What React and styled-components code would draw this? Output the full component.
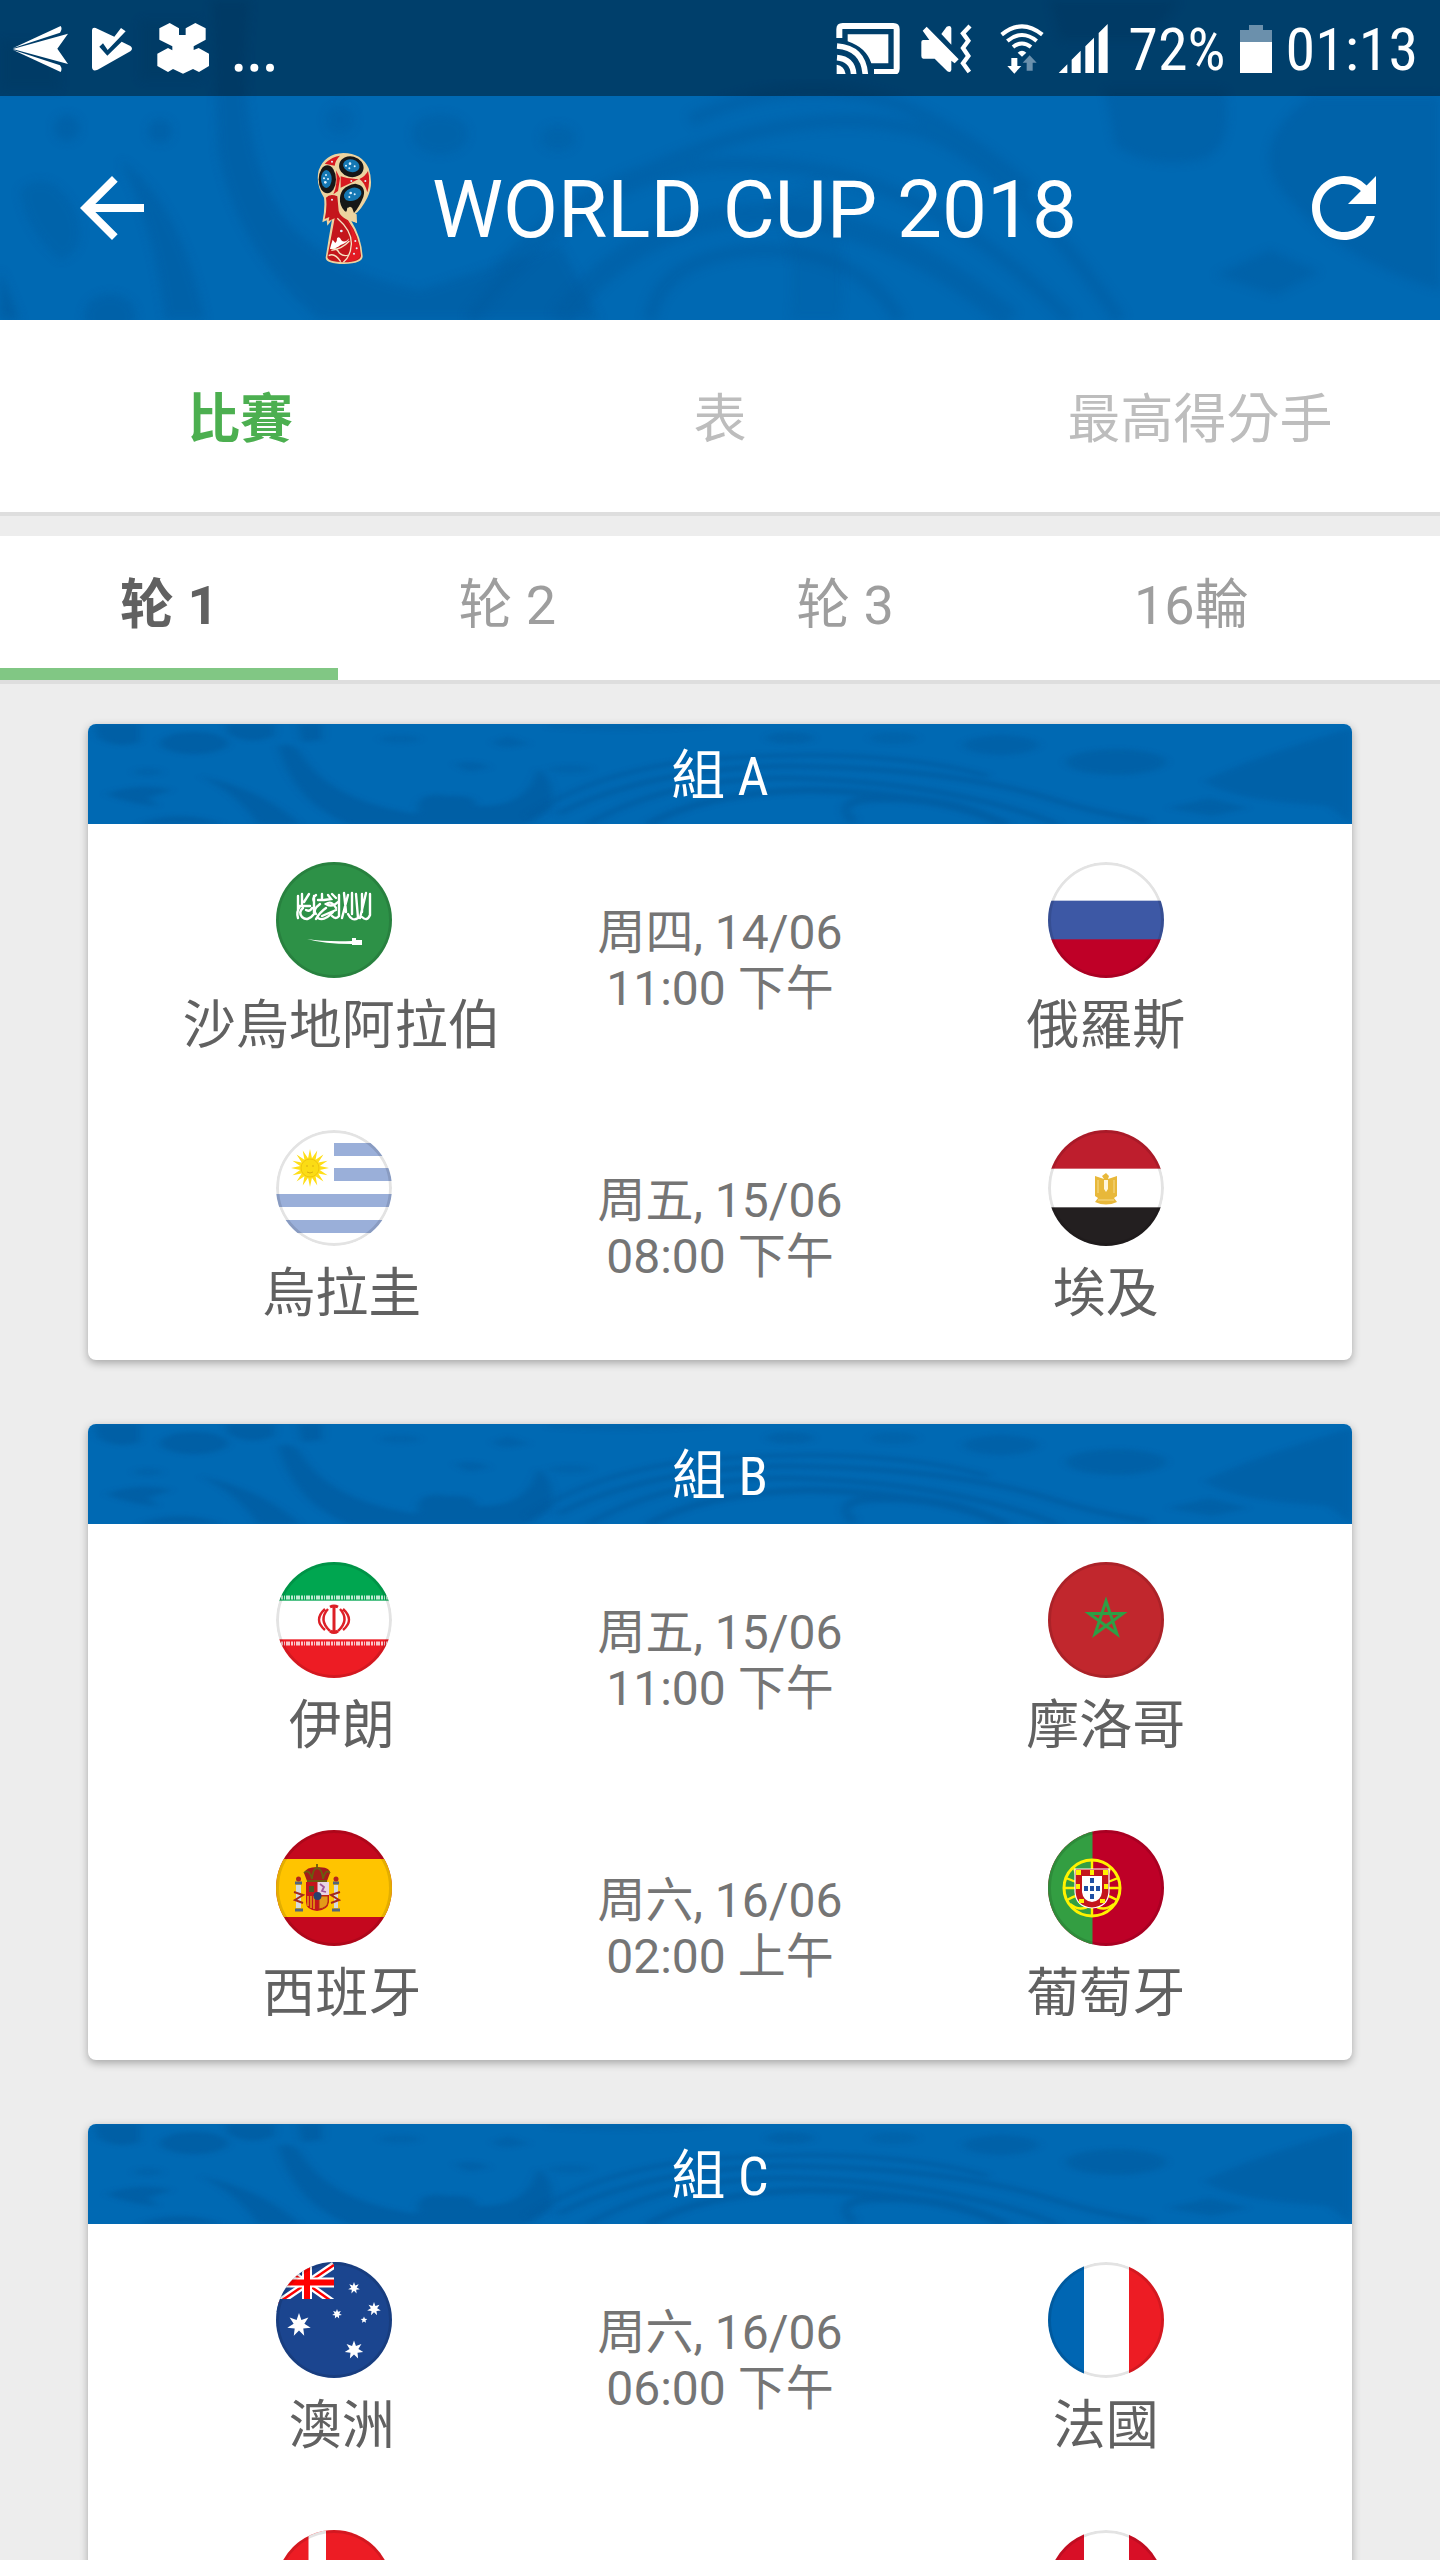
import React from 'react';
import styled, { createGlobalStyle } from 'styled-components';
import { MdArrowBack, MdRefresh } from 'react-icons/md';

const GlobalStyle = createGlobalStyle`
  *, *::before, *::after { box-sizing: border-box; }
  body {
    margin: 0;
    background: #ededed;
    font-family: Roboto, "Noto Sans CJK TC", sans-serif;
  }
  button {
    border: 0;
    padding: 0;
    background: none;
    color: inherit;
    font: inherit;
    cursor: pointer;
  }
`;

const CONDENSED = '"Roboto Condensed", Roboto, "Noto Sans CJK TC", sans-serif';

/* ---------- layout ---------- */

const Screen = styled.div`
  display: flex;
  flex-direction: column;
  height: 100vh;
  overflow: hidden;
`;

const TopArea = styled.header`
  position: relative;
  flex: none;
  background: #0069b3;
  color: #fff;
`;

const PatternLayer = styled.svg`
  position: absolute;
  inset: 0;
  width: 100%;
  height: 100%;
`;

const StatusBar = styled.div`
  position: relative;
  display: flex;
  align-items: center;
  justify-content: space-between;
  height: 96px;
  padding: 0 22px 0 12px;
  background: rgba(0, 0, 0, 0.4);
`;

const StatusGroup = styled.div`
  display: flex;
  align-items: center;
  gap: ${(p) => p.$gap}px;
`;

const StatusIcon = styled.svg`
  display: block;
  height: 52px;
  width: ${(p) => p.$w}px;
`;

const StatusText = styled.span`
  font-family: ${CONDENSED};
  font-size: 60px;
  line-height: 92px;
  padding-top: 4px;
`;

const Toolbar = styled.div`
  position: relative;
  display: flex;
  align-items: center;
  height: 224px;
  padding: 0 48px 0 64px;
`;

const IconButton = styled.button`
  display: flex;
  svg { width: 96px; height: 96px; }
`;

const Brand = styled.div`
  display: flex;
  flex: 1;
  align-items: center;
  gap: 60px;
  margin-left: 156px;
`;

const TrophySvg = styled.svg`
  width: 56px;
  height: 115px;
`;

const Title = styled.h1`
  margin: 0;
  padding-top: 4px;
  font-size: 80px;
  line-height: 96px;
  font-weight: 400;
`;

const MainTabs = styled.nav`
  display: grid;
  flex: none;
  grid-template-columns: repeat(3, 1fr);
  height: 196px;
  background: #fff;
  border-bottom: 4px solid #dedede;
`;

const MainTab = styled.button`
  font-size: 53px;
  line-height: 60px;
  padding-top: 8px;
  font-weight: ${(p) => (p.$active ? 700 : 400)};
  color: ${(p) => (p.$active ? '#4caf50' : '#bdbdbd')};
`;

const RoundTabs = styled.nav`
  display: flex;
  flex: none;
  height: 148px;
  margin-top: 20px;
  background: #fff;
  border-bottom: 4px solid #dedede;
`;

const RoundTab = styled.button`
  padding: 0 120px 4px;
  font-size: 54px;
  line-height: 64px;
  white-space: pre;
  font-weight: ${(p) => (p.$active ? 700 : 400)};
  color: ${(p) => (p.$active ? '#616161' : '#9e9e9e')};
  border-top: 12px solid transparent;
  border-bottom: 12px solid ${(p) => (p.$active ? '#81c784' : 'transparent')};
`;

const Groups = styled.main`
  display: flex;
  flex-direction: column;
  gap: 64px;
  padding: 40px 88px;
`;

const Card = styled.section`
  flex: none;
  border-radius: 8px;
  overflow: hidden;
  background: #fff;
  box-shadow: 0 3px 8px rgba(0, 0, 0, 0.3);
`;

const CardHeader = styled.div`
  position: relative;
  height: 100px;
  background: #0069b3;
  color: #fff;
`;

const CardTitle = styled.h2`
  position: relative;
  margin: 0;
  padding-top: 8px;
  font-family: ${CONDENSED};
  font-size: 54px;
  line-height: 90px;
  font-weight: 400;
  text-align: center;
`;

const MatchRow = styled.div`
  display: grid;
  grid-template-columns: 2fr 1fr 2fr;
  align-items: center;
  min-height: 268px;
`;

const Team = styled.div`
  display: flex;
  flex-direction: column;
  align-items: center;
  align-self: start;
  gap: 18px;
  padding-top: 38px;
  padding-left: ${(p) => (p.$side === 'away' ? 13 : 2)}px;
`;

const FlagSvg = styled.svg`
  display: block;
  width: 116px;
  height: 116px;
  margin-right: ${(p) => (p.$side === 'home' ? 16 : 0)}px;
`;

const TeamName = styled.span`
  font-size: 53px;
  line-height: 60px;
  color: #616161;
  white-space: nowrap;
`;

const Kickoff = styled.time`
  grid-column: 2;
  display: flex;
  flex-direction: column;
  align-items: center;
  padding-top: 5px;
  font-size: 48px;
  line-height: 56px;
  color: #757575;
  white-space: nowrap;
`;

/* ---------- background patterns ---------- */

const HeaderPattern = () => (
  <PatternLayer viewBox="0 0 1440 320" preserveAspectRatio="none" aria-hidden="true">
    <defs>
      <filter id="soft-top" x="-5%" y="-5%" width="110%" height="110%"><feGaussianBlur stdDeviation="5" /></filter>
    </defs>
    <g filter="url(#soft-top)" fill="#005a9e" stroke="none" opacity="0.65">
      <path d="M212 0 L250 0 Q232 150 290 225 Q340 275 420 290 L560 245 L600 320 L320 320 Q235 250 218 150 Z" opacity="0.7" />
      <path d="M120 160 Q180 200 205 320 L165 320 Q155 230 120 160 Z" opacity="0.7" />
      <circle cx="67" cy="128" r="13" opacity="0.7" />
      <circle cx="160" cy="131" r="12" opacity="0.7" />
      <circle cx="340" cy="120" r="15" opacity="0.4" />
      <ellipse cx="440" cy="134" rx="28" ry="20" opacity="0.6" />
      <ellipse cx="558" cy="138" rx="18" ry="13" opacity="0.5" />
      <path d="M20 190 Q50 165 75 210 Q90 250 60 260 Q25 230 20 190Z" opacity="0.6" />
      <ellipse cx="110" cy="316" rx="26" ry="22" opacity="0.7" />
      <path d="M0 40 H60 V90 H0Z M140 20 H200 V80 H140Z" opacity="0.5" />
      <path d="M0 270 L20 320 L0 320Z" />
    </g>
    <g filter="url(#soft-top)" fill="none" stroke="#005a9e" strokeWidth="14" opacity="0.4">
      <path d="M500 270 Q560 200 650 170 Q800 100 920 130 Q1010 160 1120 320" />
      <path d="M470 320 Q600 150 760 165 Q920 165 1070 320" />
      <path d="M560 320 Q640 210 780 215 Q900 225 1010 320" strokeWidth="22" />
      <path d="M650 320 Q660 255 760 250 Q860 250 900 320" />
      <path d="M690 120 Q800 70 900 105 Q960 130 1030 190" />
    </g>
    <g filter="url(#soft-top)" fill="#005a9e" opacity="0.45">
      <path d="M1105 90 H1225 Q1235 150 1200 160 Q1150 170 1115 145Z" />
      <path d="M1310 96 Q1240 150 1290 200 Q1340 260 1440 290 L1440 96Z" />
      <path d="M1215 275 L1270 250 L1320 272 L1275 295Z" />
      <path d="M820 180 Q850 230 840 320 L790 320 Q800 240 770 200Z" opacity="0.5" />
      <path d="M1050 0 H1180 L1150 40 H1060Z" />
    </g>
  </PatternLayer>
);

const CardPattern = ({ id }) => (
  <PatternLayer viewBox="0 0 1264 100" preserveAspectRatio="none" aria-hidden="true">
    <defs>
      <filter id={id} x="-5%" y="-15%" width="110%" height="130%"><feGaussianBlur stdDeviation="4 2" /></filter>
    </defs>
    <g filter={`url(#${id})`} fill="#005a9e" opacity="0.65">
      <ellipse cx="106" cy="19" rx="34" ry="11" />
      <path d="M6 0 H52 V18 Q30 26 10 14Z" />
      <path d="M138 0 H186 V12 Q162 22 140 10Z M210 0 H234 V16 L214 18Z" />
      <path d="M18 70 Q50 58 84 66 L60 74 L70 82 Q40 80 18 70Z" />
      <ellipse cx="60" cy="48" rx="14" ry="4" opacity="0.6" />
      <path d="M190 22 Q206 16 216 34 Q246 78 330 90 Q326 66 360 72 Q390 70 388 82 Q440 84 450 44 Q470 60 462 86 L440 100 L260 100 Q205 78 190 22Z" />
      <path d="M112 52 Q176 66 212 100 L170 100 Q150 70 112 52Z" />
      <path d="M50 100 Q90 84 136 100Z" />
      <ellipse cx="312" cy="15" rx="20" ry="4" opacity="0.6" />
      <path d="M366 40 Q390 34 402 44 L380 48Z M404 18 L420 12 L442 20 L416 24Z" opacity="0.7" />
      <ellipse cx="482" cy="45" rx="22" ry="4" opacity="0.5" />
      <path d="M460 0 H640 Q560 10 460 4Z" opacity="0.5" />
      <ellipse cx="702" cy="14" rx="24" ry="6" opacity="0.7" />
      <ellipse cx="806" cy="14" rx="24" ry="6" opacity="0.5" />
      <ellipse cx="913" cy="21" rx="38" ry="10" opacity="0.7" />
      <ellipse cx="1028" cy="38" rx="50" ry="13" opacity="0.8" />
      <path d="M1116 57 Q1160 34 1264 4 L1264 100 L1240 82 Q1140 76 1116 57Z" opacity="0.7" />
      <path d="M1080 84 L1122 74 L1160 84 L1124 92Z" opacity="0.8" />
    </g>
    <g filter={`url(#${id})`} fill="none" stroke="#005a9e" strokeWidth="5" opacity="0.65">
      <path d="M470 90 Q560 44 700 42 Q860 44 960 74 Q1010 90 1060 97" />
      <path d="M500 100 Q580 54 700 54 Q860 58 970 100" />
      <path d="M440 92 Q520 40 640 34 Q800 24 900 52" strokeWidth="4" />
      <path d="M560 100 Q620 68 720 66 Q840 68 920 100" strokeWidth="7" />
      <path d="M766 98 Q740 74 800 74 Q870 76 910 98" strokeWidth="8" />
    </g>
  </PatternLayer>
);

/* ---------- status icons ---------- */

const PlaneIcon = () => (
  <StatusIcon $w={56} viewBox="36 36 168 156" fill="#fff">
    <path d="M38 117 L204 71 L172 116 L204 162Z" />
    <path d="M38 115 L182 48 Q188 56 180 68Z" />
    <path d="M38 119 L180 166 Q188 176 182 186Z" />
  </StatusIcon>
);

const PlayCheckIcon = () => (
  <StatusIcon $w={41} viewBox="279 36 123 156" fill="#fff">
    <path d="M279 60 Q280 51 290 54 L346 80 L366 54 L380 64 L326 120 L312 100 L301 110 L325 137 L368 95 L394 108 Q404 116 394 124 L296 179 Q280 186 279 172Z" />
  </StatusIcon>
);

const HexIcon = () => (
  <StatusIcon $w={53} viewBox="474 36 159 156" fill="#fff">
    <path d="M512 39 L540 55 V75 H560 V55 L589 39 L620 55 V89 L584 109 V120 L599 114 L630 131 V168 L600 186 L582 177 L552 191 L522 177 L507 186 L475 168 V131 L507 114 L520 121 V109 L481 89 V55Z" />
  </StatusIcon>
);

const DotsIcon = () => (
  <StatusIcon $w={42} viewBox="698 36 126 156" fill="#fff">
    <circle cx="712" cy="173" r="12" />
    <circle cx="759" cy="173" r="12" />
    <circle cx="806" cy="173" r="12" />
  </StatusIcon>
);

const CastIcon = () => (
  <StatusIcon $w={64} viewBox="30 36 192 156">
    <g fill="none" stroke="#fff">
      <path d="M40 84 V58 Q40 48 50 48 H202 Q212 48 212 58 V176 Q212 186 202 186 H144" strokeWidth="18" />
      <path d="M33 143 Q80 147 83 193 M33 108 Q112 114 118 193" strokeWidth="17" />
    </g>
    <path d="M65 73 H187 V160 H136 Q120 112 65 94Z M32 164 Q56 168 59 193 H32Z" fill="#fff" />
  </StatusIcon>
);

const MuteVibrateIcon = () => (
  <StatusIcon $w={52} viewBox="282 36 156 156">
    <path d="M286 96 Q286 90 292 90 H310 L290 62 L302 50 L398 148 L386 160 L376 152 V180 Q374 190 364 184 L326 146 H292 Q286 146 286 138Z M346 72 L362 50 Q374 44 376 54 V104Z" fill="#fff" />
    <path d="M432 48 L411 70 L427 92 L411 114 L427 138 L411 160 L430 186" fill="none" stroke="#fff" strokeWidth="13" />
  </StatusIcon>
);

const WifiIcon = () => (
  <StatusIcon $w={44} viewBox="524 36 132 156">
    <g fill="none" stroke="#fff" strokeWidth="12">
      <path d="M529 74 Q590 24 651 74" />
      <path d="M546 93 Q590 57 634 93" />
      <path d="M563 111 Q590 90 617 111" />
    </g>
    <path d="M577 128 Q590 116 603 128 L590 140Z M558 144 H576 V168 H588 L567 191 L546 168 H558Z" fill="#fff" />
    <path d="M613 136 L634 158 H622 V182 H604 V158 H592Z" fill="#6b90ac" />
  </StatusIcon>
);

const SignalIcon = () => (
  <StatusIcon $w={50} viewBox="700 36 150 156" fill="#fff">
    <path d="M702 189 L728 163 V189Z M741 189 V149 L768 122 V189Z M782 189 V109 L808 83 V189Z M822 189 V69 L849 42 V189Z" />
  </StatusIcon>
);

const BatteryIcon = () => (
  <StatusIcon $w={32} viewBox="1239 36 96 156">
    <path d="M1239 60 H1266 V45 H1308 V60 H1335 V96 H1239Z" fill="#6b90ac" />
    <path d="M1239 96 H1335 V189 H1239Z" fill="#fff" />
  </StatusIcon>
);

/* ---------- trophy logo ---------- */

const Trophy = () => (
  <TrophySvg viewBox="78 60 168 345" role="img" aria-label="World Cup trophy">
    <path d="M160 66 Q215 66 236 112 Q252 160 232 200 Q214 236 194 250 L201 276 L184 270 Q214 318 218 376 Q218 398 162 399 Q108 398 107 380 Q116 320 126 266 L112 284 L110 268 L97 274 Q106 230 102 200 Q76 160 86 118 Q104 68 160 66Z" fill="#ecd3a0" />
    <path d="M108 200 Q120 186 142 196 L146 240 Q150 256 174 268 Q210 318 213 374 Q212 392 162 394 Q112 392 112 378 Q124 316 134 262 L116 270 L118 258 L104 264 Q112 230 108 200Z" fill="#c4161c" />
    <path d="M150 256 Q182 270 186 318 Q190 370 166 392 Q206 390 211 374 Q208 316 172 270Z" fill="#e31b23" />
    <path d="M104 98 Q128 76 150 74 Q136 88 134 104Z M152 136 Q180 146 206 144 Q180 158 152 170Z M208 144 Q226 136 234 120 Q242 150 232 184 Q224 154 208 144Z M138 118 L150 142 L144 180 L130 190 Q144 160 138 118Z" fill="#d71920" />
    <ellipse cx="184" cy="107" rx="37" ry="31" fill="#171717" transform="rotate(14 184 107)" />
    <ellipse cx="184" cy="104" rx="25" ry="19" fill="#1578b4" transform="rotate(14 184 104)" />
    <ellipse cx="112" cy="145" rx="26" ry="42" fill="#171717" />
    <ellipse cx="109" cy="144" rx="16" ry="27" fill="#1578b4" />
    <path d="M150 212 Q146 166 196 158 Q230 164 220 198 Q208 228 192 246 L186 230 H172 L170 244 Q154 234 150 212Z" fill="#171717" />
    <ellipse cx="188" cy="190" rx="27" ry="19" fill="#1578b4" transform="rotate(-20 188 190)" />
    <path d="M174 232 Q180 222 186 232 L188 246 L200 250 L201 276 L178 266 L168 244Z" fill="#ecd3a0" />
    <g fill="none" stroke="#f6e4c4" strokeWidth="4">
      <path d="M142 262 Q186 300 184 340 Q182 376 160 394" />
      <path d="M122 352 Q140 350 148 366 Q160 378 176 372" />
      <path d="M116 374 Q134 364 152 392" />
      <path d="M124 358 Q156 354 178 330" />
    </g>
    <path d="M128 326 Q122 344 120 354 Q138 354 152 342 Q172 336 178 322 Q164 338 154 328 Q148 314 141 322 Q142 332 136 336Z" fill="#fff" />
    <g fill="#dff2ff">
      <circle cx="180" cy="98" r="4" /><circle cx="194" cy="106" r="3" /><circle cx="178" cy="112" r="3" /><circle cx="168" cy="104" r="3" />
      <circle cx="108" cy="132" r="3" /><circle cx="114" cy="144" r="3" /><circle cx="106" cy="154" r="4" /><circle cx="102" cy="142" r="3" />
      <circle cx="182" cy="186" r="4" /><circle cx="194" cy="190" r="3" /><circle cx="178" cy="198" r="3" />
      <circle cx="154" cy="300" r="4" /><circle cx="196" cy="330" r="3" /><circle cx="200" cy="352" r="3" /><circle cx="192" cy="368" r="3" /><circle cx="126" cy="92" r="3" /><circle cx="226" cy="150" r="3" /><circle cx="184" cy="150" r="3" /><circle cx="126" cy="206" r="3" />
    </g>
  </TrophySvg>
);

/* ---------- flags ---------- */

const starPoints = (cx, cy, outer, inner, points) =>
  Array.from({ length: points * 2 }, (_, i) => {
    const r = i % 2 ? inner : outer;
    const a = (Math.PI * i) / points - Math.PI / 2;
    return `${(cx + r * Math.cos(a)).toFixed(2)},${(cy + r * Math.sin(a)).toFixed(2)}`;
  }).join(' ');

const HStripes = ({ colors }) => colors.map((c, i) => (
  <rect key={i} x="0" y={(116 / 3) * i} width="116" height="39.5" fill={c} />
));

const VStripes = ({ colors }) => [0, 36, 81].map((x, i) => (
  <rect key={x} x={x} y="0" width={i === 1 ? 45 : 36} height="116" fill={colors[i]} />
));

const FLAGS = {
  sa: (
    <>
      <rect width="116" height="116" fill="#2d9147" />
      <g fill="none" stroke="#fff" strokeWidth="2.4" strokeLinecap="round">
        <path d="M94 32 V53 Q91 60 86 55 M90 31 L84 56 M86 32 V50 M80 32 L82 56 Q76 60 72 52 M76 31 V52 M72 33 L66 56 M68 31 L70 50 M63 33 V54 Q60 58 56 54" />
        <path d="M62 40 Q56 46 50 42 Q56 38 60 46 M57 50 Q48 60 42 56 M52 33 L55 37 L48 38 M46 32 V38 H42 M50 46 Q44 50 40 57 M44 42 Q36 48 40 52 M60 48 L46 54 M56 32 L60 36" />
        <path d="M38 34 V52 Q32 60 26 55 Q22 50 27 46 M34 44 H24 Q20 50 22 56 M33 32 L28 40 M26 32 V42 M22 34 V48 M30 48 Q34 50 36 46 M40 33 Q36 36 38 40" />
      </g>
      <path d="M31 77 Q50 80 76 79 V76 H80 V78 H86 V83 H76 V82 Q48 82 31 77Z" fill="#fff" />
    </>
  ),
  ru: <HStripes colors={['#ffffff', '#3d58a5', '#bf0027']} />,
  uy: (
    <>
      <rect width="116" height="116" fill="#fff" />
      <path d="M58 13H116V26H58Z M58 38H116V51H58Z M0 64H116V77H0Z M0 90H116V103H0Z" fill="#9aafd9" />
      <polygon points={starPoints(34, 38, 19, 10, 16)} fill="#ffde17" />
      <circle cx="34" cy="38" r="9" fill="#fbdc14" stroke="#eec50f" strokeWidth="1" />
      <path d="M30 36h2 M36 36h2 M31 42q3 2 6 0" stroke="#d9ae10" fill="none" />
    </>
  ),
  eg: (
    <>
      <HStripes colors={['#be1e2d', '#ffffff', '#231f20']} />
      <path d="M54 46 L58 43 L61 46 L60 49 L69 46 V66 L66 68 L69 72 Q58 77 47 72 L50 68 L47 66 V46 L56 49Z" fill="#e8b83a" />
      <path d="M56 50h4v9l-2 3-2-3z" fill="#fff6dc" />
      <path d="M50 50v13 M66 50v13 M50 70h16" stroke="#f7dc8c" fill="none" />
    </>
  ),
  ir: (
    <>
      <HStripes colors={['#00a650', '#ffffff', '#ed1c24']} />
      <path d="M0 35.5H116" stroke="#fff" strokeWidth="4" strokeDasharray="4 1 2 1 1 1" opacity="0.75" />
      <path d="M0 81.5H116" stroke="#fff" strokeWidth="4" strokeDasharray="4 1 2 1 1 1" opacity="0.75" />
      <g fill="none" stroke="#dd2027" strokeWidth="2.4">
        <path d="M58 44V71 M54 45q4-2 8 0 M54 69q4 3 8 0" strokeWidth="3" />
        <path d="M52 47 Q42 58 54 69 M64 47 Q74 58 62 69 M49 47 Q37 58 49 68 M67 47 Q79 58 67 68" />
      </g>
    </>
  ),
  es: (
    <>
      <rect width="116" height="116" fill="#c4081e" />
      <rect y="29" width="116" height="58" fill="#ffc400" />
      <path d="M28 43 Q30 37 41 37 Q54 37 54 43 L51 51H31Z" fill="#a51b1b" />
      <path d="M28 43 Q33 38 36 49 Q37 38 41 38 Q46 38 47 49 Q50 38 54 43 M31 51H51 M41 34V38" fill="none" stroke="#6b5b10" strokeWidth="1.8" />
      <path d="M30 52H53V72Q52 80 41 81Q30 80 30 72Z" fill="#c4161c" />
      <path d="M41.500 52H53V65H41.500Z" fill="#e9d5e4" />
      <path d="M44 54l4 3-2 4 4 1" stroke="#a0569a" strokeWidth="1.8" fill="none" />
      <path d="M33 56h5v6h-5z" fill="#4a5a24" />
      <path d="M32 66V76 M35 66V78 M38 66V79" stroke="#e8b010" strokeWidth="1.400" />
      <path d="M43 66H52V72Q51 78 43 79Z" fill="#e39a18" stroke="#b53116" />
      <circle cx="41.500" cy="66" r="4" fill="#27406d" />
      <path d="M20 55H25V78H20Z M58 55H62V78H58Z" fill="#d5dbe0" />
      <path d="M18 62l9 3-8 5 8 3 M64 62l-9 3 8 5-8 3" stroke="#a62a1e" strokeWidth="2" fill="none" />
      <path d="M19 53H26 M57 53H63 M19 80H27 M56 80H64" stroke="#54657c" strokeWidth="3" />
      <circle cx="22.500" cy="49" r="2.500" fill="#b5261c" /><circle cx="60" cy="49" r="2.500" fill="#b5261c" />
    </>
  ),
  ma: (
    <>
      <rect width="116" height="116" fill="#c1272d" />
      <path d="M58 39 L69 72 L41 51.500 H75 L47 72Z" fill="none" stroke="#2f9e45" strokeWidth="3" />
    </>
  ),
  pt: (
    <>
      <rect width="116" height="116" fill="#be0027" />
      <rect width="44.5" height="116" fill="#339e42" />
      <g fill="none" stroke="#fff200">
        <circle cx="44" cy="58" r="28" strokeWidth="3" />
        <path d="M18 48 Q44 60 70 48 M16 58H72 M19 70 Q44 56 69 70 M26 38Q44 92 66 74 M62 38Q44 92 22 74 M44 30V86" strokeWidth="2.400" />
      </g>
      <path d="M27 39H61V62Q60 77 44 78Q28 77 27 62Z" fill="#c4161c" stroke="#fff" strokeWidth="1.200" />
      <path d="M34 46H54V62Q53 71 44 72Q35 71 34 62Z" fill="#fff" />
      <g fill="#1f4fa3"><path d="M42 48h4v5h-4z M42 56h4v5h-4z M42 64h4v5h-4z M36 56h4v5h-4z M48 56h4v5h-4z" /></g>
      <g fill="#fff200"><path d="M28 40h5v5h-5z M42 40h4v5h-4z M55 40h5v5h-5z M28 54h4v5h-4z M56 54h4v5h-4z M31 69h5v4h-5z M52 69h5v4h-5z" /></g>
    </>
  ),
  au: (
    <>
      <rect width="116" height="116" fill="#1b458f" />
      <path d="M0 0 L58 41 M58 3 L2 41" stroke="#fff" strokeWidth="7" />
      <path d="M0 0 L58 41 M58 3 L2 41" stroke="#f00" strokeWidth="2.500" />
      <path d="M31 0V37 M0 20.500H58" stroke="#fff" strokeWidth="10" />
      <path d="M31 0V37 M0 20.500H58" stroke="#f00" strokeWidth="6" />
      <path d="M0 37H62V50H0Z M58 0H70V50H58Z" fill="#1b458f" />
      <g fill="#fff">
        <polygon points={starPoints(78, 26, 6, 2.8, 7)} />
        <polygon points={starPoints(98, 47, 7, 3.2, 7)} />
        <polygon points={starPoints(61, 52, 5, 2.4, 7)} />
        <polygon points={starPoints(88, 58, 3.5, 1.6, 5)} />
        <polygon points={starPoints(23, 63, 12, 5.5, 7)} />
        <polygon points={starPoints(78, 88, 9.500, 4.5, 7)} />
      </g>
    </>
  ),
  fr: <VStripes colors={['#0066b3', '#ffffff', '#ed1c24']} />,
  dk: (
    <>
      <rect width="116" height="116" fill="#ed1c24" />
      <path d="M32.500 0H50V116H32.500Z M0 49H116V67H0Z" fill="#fff" />
    </>
  ),
  pe: <VStripes colors={['#d80f26', '#ffffff', '#d80f26']} />,
};

const Flag = ({ code, side }) => (
  <FlagSvg viewBox="0 0 116 116" $side={side} aria-hidden="true">
    <defs>
      <clipPath id={`round-${code}`}><circle cx="58" cy="58" r="58" /></clipPath>
    </defs>
    <g clipPath={`url(#round-${code})`}>
      {FLAGS[code]}
      <circle cx="58" cy="58" r="56.500" fill="none" stroke="#000" strokeOpacity="0.11" strokeWidth="3" />
    </g>
  </FlagSvg>
);

/* ---------- data ---------- */

const MAIN_TABS = ['比賽', '表', '最高得分手'];
const ROUND_TABS = ['轮 1', '轮 2', '轮 3', '16輪'];

const GROUPS = [
  {
    name: '組 A',
    matches: [
      { home: ['sa', '沙烏地阿拉伯'], away: ['ru', '俄羅斯'], when: ['周四, 14/06', '11:00 下午'] },
      { home: ['uy', '烏拉圭'], away: ['eg', '埃及'], when: ['周五, 15/06', '08:00 下午'] },
    ],
  },
  {
    name: '組 B',
    matches: [
      { home: ['ir', '伊朗'], away: ['ma', '摩洛哥'], when: ['周五, 15/06', '11:00 下午'] },
      { home: ['es', '西班牙'], away: ['pt', '葡萄牙'], when: ['周六, 16/06', '02:00 上午'] },
    ],
  },
  {
    name: '組 C',
    matches: [
      { home: ['au', '澳洲'], away: ['fr', '法國'], when: ['周六, 16/06', '06:00 下午'] },
      { home: ['dk'], away: ['pe'], when: [] },
    ],
  },
];

const TeamCell = ({ team: [code, name], side }) => (
  <Team $side={side}>
    <Flag code={code} side={side} />
    {name && <TeamName>{name}</TeamName>}
  </Team>
);

const Match = ({ match }) => (
  <MatchRow>
    <TeamCell team={match.home} side="home" />
    <Kickoff>
      {match.when.map((line) => <span key={line}>{line}</span>)}
    </Kickoff>
    <TeamCell team={match.away} side="away" />
  </MatchRow>
);

export default function App() {
  return (
    <Screen>
      <GlobalStyle />
      <TopArea>
        <HeaderPattern />
        <StatusBar>
          <StatusGroup $gap={24}>
            <PlaneIcon />
            <PlayCheckIcon />
            <HexIcon />
            <DotsIcon />
          </StatusGroup>
          <StatusGroup $gap={20}>
            <StatusGroup $gap={28}>
              <StatusGroup $gap={20}>
                <CastIcon />
                <MuteVibrateIcon />
              </StatusGroup>
              <StatusGroup $gap={14}>
                <WifiIcon />
                <SignalIcon />
              </StatusGroup>
            </StatusGroup>
            <StatusGroup $gap={14}>
              <StatusText>72%</StatusText>
              <BatteryIcon />
              <StatusText>01:13</StatusText>
            </StatusGroup>
          </StatusGroup>
        </StatusBar>
        <Toolbar>
          <IconButton type="button" aria-label="Back"><MdArrowBack /></IconButton>
          <Brand>
            <Trophy />
            <Title>WORLD CUP 2018</Title>
          </Brand>
          <IconButton type="button" aria-label="Refresh"><MdRefresh /></IconButton>
        </Toolbar>
      </TopArea>

      <MainTabs>
        {MAIN_TABS.map((label, i) => (
          <MainTab key={label} type="button" $active={i === 0}>{label}</MainTab>
        ))}
      </MainTabs>

      <RoundTabs>
        {ROUND_TABS.map((label, i) => (
          <RoundTab key={label} type="button" $active={i === 0}>{label}</RoundTab>
        ))}
      </RoundTabs>

      <Groups>
        {GROUPS.map((group, i) => (
          <Card key={group.name}>
            <CardHeader>
              <CardPattern id={`soft-card-${i}`} />
              <CardTitle>{group.name}</CardTitle>
            </CardHeader>
            {group.matches.map((match) => (
              <Match key={match.home[0]} match={match} />
            ))}
          </Card>
        ))}
      </Groups>
    </Screen>
  );
}
